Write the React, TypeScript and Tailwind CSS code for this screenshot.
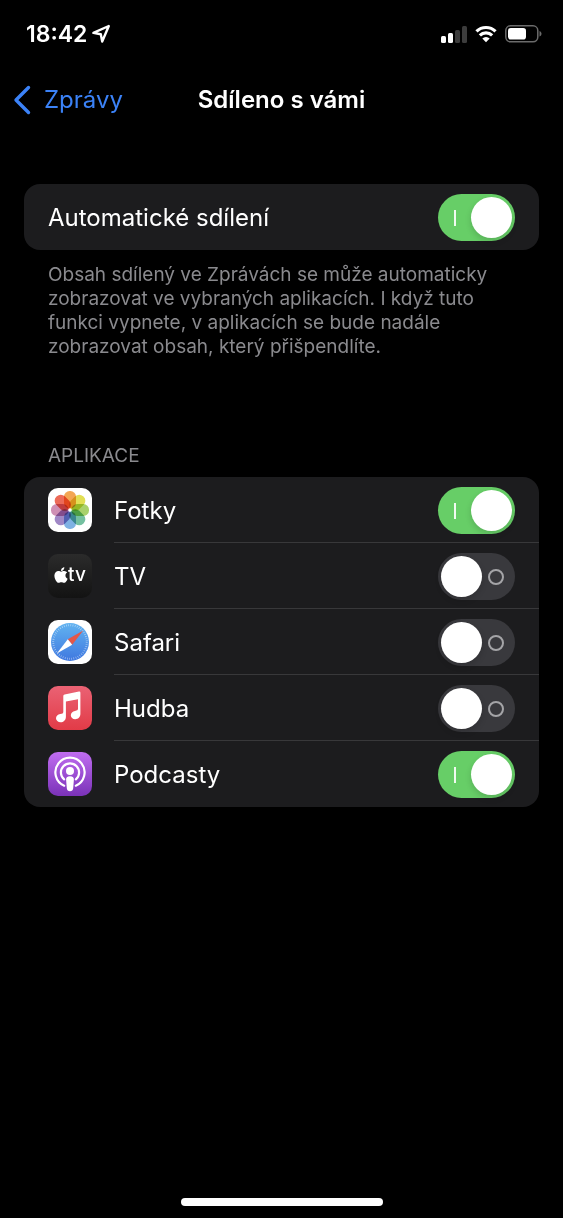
import { useState } from 'react';
import type { ReactNode } from 'react';
import { FaApple } from 'react-icons/fa';

interface SwitchRowProps {
  label: string;
  icon?: ReactNode;
  divided?: boolean;
  defaultOn?: boolean;
}

const PETALS = [
  '#f3a653',
  '#e2df55',
  '#a9d16c',
  '#74c0a0',
  '#7fb2e4',
  '#a088c6',
  '#cf8fb4',
  '#ec6a58',
];

function PhotosIcon() {
  return (
    <svg viewBox="0 0 44 44" className="size-11 rounded-[10px] bg-white" aria-hidden="true">
      <g className="isolate">
        {PETALS.map((color, i) => (
          <rect
            key={color}
            x="16"
            y="3"
            width="12"
            height="17.5"
            rx="5.6"
            fill={color}
            transform={`rotate(${i * 45} 22 22)`}
            className="mix-blend-multiply"
          />
        ))}
      </g>
      <circle cx="22" cy="22" r="1.5" fill="#fff" />
    </svg>
  );
}

function TvIcon() {
  return (
    <span
      className="flex size-11 items-center justify-center rounded-[10px] bg-linear-to-b from-[#2b2b2b] to-[#131313] pb-0.5 text-white"
      aria-hidden="true"
    >
      <FaApple className="h-[18px] w-[14px]" />
      <span className="text-[19px] leading-5 font-medium">tv</span>
    </span>
  );
}

function SafariIcon() {
  return (
    <svg viewBox="0 0 44 44" className="size-11 rounded-[10px] bg-white" aria-hidden="true">
      <defs>
        <linearGradient id="safari-sea" x1="0" y1="0" x2="0" y2="1">
          <stop offset="0" stopColor="#62b3f0" />
          <stop offset="1" stopColor="#3f78e0" />
        </linearGradient>
      </defs>
      <circle cx="22" cy="22" r="19" fill="url(#safari-sea)" />
      <circle
        cx="22"
        cy="22"
        r="16.8"
        fill="none"
        stroke="#fff"
        strokeOpacity="0.6"
        strokeWidth="2"
        strokeDasharray="0.6 1.6"
      />
      <path d="M35.2 10.4 L19.8 19.2 L24.2 24.8 Z" fill="#e4574a" />
      <path d="M8.8 33.6 L19.8 19.2 L24.2 24.8 Z" fill="#fff" />
    </svg>
  );
}

function MusicIcon() {
  return (
    <svg viewBox="0 0 44 44" className="size-11 rounded-[10px]" aria-hidden="true">
      <defs>
        <linearGradient id="music-bg" x1="0" y1="0" x2="0" y2="1">
          <stop offset="0" stopColor="#ea6274" />
          <stop offset="1" stopColor="#e23b47" />
        </linearGradient>
      </defs>
      <rect width="44" height="44" fill="url(#music-bg)" />
      <path
        d="M16.6 8.4 31 5.6Q32.4 5.3 32.4 6.8V27.8C32.4 31.4 30 33.2 27.2 33.2C24.6 33.2 22.8 31.5 22.8 29.2C22.8 26.8 24.6 25.3 27 24.9C29 24.6 30 24.2 30 22.6V13.2L17.9 15.6V30.8C17.9 34.4 15.4 36.3 12.6 36.3C10 36.3 8 34.6 8 32.3C8 30 9.8 28.5 12.2 28C14.4 27.6 15.3 27.4 15.3 25.7V10Q15.3 8.7 16.6 8.4Z"
        fill="#fff"
      />
    </svg>
  );
}

function PodcastsIcon() {
  return (
    <svg viewBox="0 0 44 44" className="size-11 rounded-[10px]" aria-hidden="true">
      <defs>
        <linearGradient id="podcasts-bg" x1="0" y1="0" x2="0" y2="1">
          <stop offset="0" stopColor="#c06df0" />
          <stop offset="1" stopColor="#7a32b8" />
        </linearGradient>
      </defs>
      <rect width="44" height="44" fill="url(#podcasts-bg)" />
      <g fill="none" stroke="#fff" strokeWidth="2.2" strokeLinecap="round">
        <path d="M16.2 33.7A14.6 14.6 0 1 1 27.8 33.7" />
        <path d="M16.2 27.4A9.1 9.1 0 1 1 27.8 27.4" />
      </g>
      <circle cx="22" cy="19" r="4" fill="#fff" />
      <path
        d="M22 24.2C24.8 24.2 26.1 25.4 25.9 27.8L25.2 36.2C25 38.2 23.9 39.2 22 39.2C20.1 39.2 19 38.2 18.8 36.2L18.1 27.8C17.9 25.4 19.2 24.2 22 24.2Z"
        fill="#fff"
      />
    </svg>
  );
}

const APPS = [
  { label: 'Fotky', icon: <PhotosIcon />, on: true },
  { label: 'TV', icon: <TvIcon />, on: false },
  { label: 'Safari', icon: <SafariIcon />, on: false },
  { label: 'Hudba', icon: <MusicIcon />, on: false },
  { label: 'Podcasty', icon: <PodcastsIcon />, on: true },
];

function SwitchRow({ label, icon, divided = false, defaultOn = false }: SwitchRowProps) {
  const [on, setOn] = useState(defaultOn);

  return (
    <label className="flex h-[66px] cursor-pointer items-center pl-6">
      {icon && <span className="mr-[22px] shrink-0">{icon}</span>}
      <span
        className={`flex h-full flex-1 items-center justify-between border-b pt-0.5 pr-6 ${
          divided ? 'border-[#38383a]' : 'border-transparent'
        }`}
      >
        <span className="text-2xl">{label}</span>
        <span className="relative flex shrink-0">
          <input
            type="checkbox"
            role="switch"
            checked={on}
            onChange={() => setOn(!on)}
            className="h-[47px] w-[77px] cursor-pointer appearance-none rounded-full bg-[#39393d] transition-colors checked:bg-[#67ce67]"
          />
          {/* I / O marks and the knob */}
          <span
            className={`pointer-events-none absolute inset-0 flex items-center justify-between ${
              on ? 'pr-[3px] pl-4' : 'flex-row-reverse pr-[11px] pl-[3px]'
            }`}
          >
            {on ? (
              <span className="h-4 w-[2px] bg-white/90" />
            ) : (
              <span className="size-4 rounded-full border-2 border-[#a5a5a8]" />
            )}
            <span className="size-[41px] rounded-full bg-white shadow-[0_3px_6px_rgba(0,0,0,0.15)]" />
          </span>
        </span>
      </span>
    </label>
  );
}

function StatusBar() {
  return (
    <div className="flex h-[68px] items-center justify-between pr-[21px] pl-[26px]">
      <div className="flex items-center gap-1">
        <span className="text-[23px] leading-7 font-semibold">18:42</span>
        <svg viewBox="0 0 20 20" className="size-5" aria-hidden="true">
          <path
            d="M17.8 2 2.4 8.9 9.8 10.2 11.2 17.5Z"
            fill="none"
            stroke="#fff"
            strokeWidth="2.4"
            strokeLinejoin="round"
          />
        </svg>
      </div>
      <div className="flex items-center gap-2">
        <svg viewBox="0 0 26 17" className="h-[17px] w-[26px]" aria-hidden="true">
          <rect x="0" y="10" width="5" height="7" rx="1.5" fill="#fff" />
          <rect x="7" y="7" width="5" height="10" rx="1.5" fill="#fff" />
          <rect x="14" y="4" width="5" height="13" rx="1.5" fill="#3c3c3c" />
          <rect x="21" y="0" width="5" height="17" rx="1.5" fill="#3c3c3c" />
        </svg>
        <svg viewBox="0 0 24 18" className="h-[18px] w-[22px]" aria-hidden="true">
          <g fill="none" stroke="#fff" strokeWidth="3.4">
            <path d="M1.6 6.2A14.8 14.8 0 0 1 22.4 6.2" />
            <path d="M5.3 10.6A9.4 9.4 0 0 1 18.7 10.6" />
          </g>
          <path d="M12 18 8 14A5.7 5.7 0 0 1 16 14Z" fill="#fff" />
        </svg>
        <svg viewBox="0 0 37 18" className="h-[18px] w-[37px]" aria-hidden="true">
          <rect
            x="0.8"
            y="0.8"
            width="32"
            height="16"
            rx="4.8"
            fill="none"
            stroke="#6b6b6b"
            strokeWidth="1.5"
          />
          <rect x="3" y="3" width="18" height="11.6" rx="2.8" fill="#fff" />
          <path d="M34.5 6V11.6C37.2 10.6 37.2 7 34.5 6Z" fill="#6b6b6b" />
        </svg>
      </div>
    </div>
  );
}

export default function App() {
  return (
    <div className="flex min-h-screen flex-col bg-black font-['Inter','Noto_Sans',sans-serif] text-white">
      <StatusBar />

      <header className="grid grid-cols-[1fr_auto_1fr] items-center px-[13px] py-4">
        <a href="#zpravy" className="flex items-center gap-[13px] text-2xl leading-8 text-[#3b82f7]">
          <svg viewBox="0 0 18 30" className="h-[30px] w-[18px]" aria-hidden="true">
            <path
              d="M15.5 2.5 3 15 15.5 27.5"
              fill="none"
              stroke="currentColor"
              strokeWidth="3.4"
              strokeLinecap="round"
              strokeLinejoin="round"
            />
          </svg>
          Zprávy
        </a>
        <h1 className="text-2xl leading-8 font-semibold">Sdíleno s vámi</h1>
      </header>

      <main className="px-6 pt-[52px]">
        <section className="rounded-2xl bg-[#1c1c1e]">
          <SwitchRow label="Automatické sdílení" defaultOn />
        </section>
        <p className="px-6 pt-[13px] text-[19px] leading-6 text-[#8a8a8e]">
          Obsah sdílený ve Zprávách se může automaticky zobrazovat ve vybraných aplikacích. I když
          tuto funkci vypnete, v aplikacích se bude nadále zobrazovat obsah, který přišpendlíte.
        </p>

        <h2 className="px-6 pt-[85px] pb-[9px] text-[19px] leading-6 text-[#8a8a8e]">APLIKACE</h2>
        <section className="rounded-2xl bg-[#1c1c1e]">
          {APPS.map((app, i) => (
            <SwitchRow
              key={app.label}
              label={app.label}
              icon={app.icon}
              divided={i < APPS.length - 1}
              defaultOn={app.on}
            />
          ))}
        </section>
      </main>

      <div className="mx-auto mt-auto mb-3 h-2 w-[202px] rounded-full bg-white" />
    </div>
  );
}
